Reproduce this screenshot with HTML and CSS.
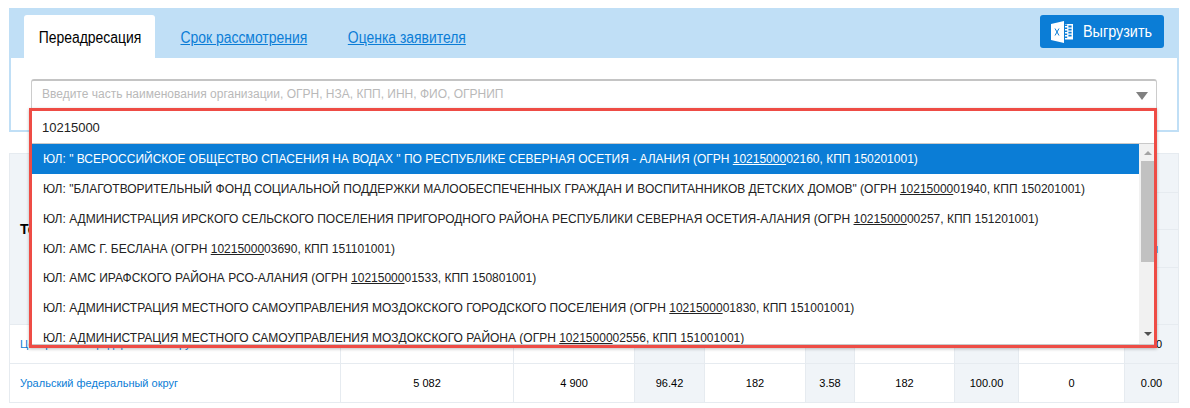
FILE: index.html
```html
<!DOCTYPE html>
<html lang="ru">
<head>
<meta charset="utf-8">
<title>Переадресация</title>
<link rel="stylesheet" href="styles.css">
</head>
<body>
<section class="panel">
  <div class="tabbar">
    <nav class="tabs">
      <span class="tab t1 active"><span class="narrow">Переадресация</span></span>
      <a class="tab t2" href="#"><span class="narrow">Срок рассмотрения</span></a>
      <a class="tab t3" href="#"><span class="narrow">Оценка заявителя</span></a>
    </nav>
    <button class="export">
      <svg class="xls" width="24" height="24" viewBox="0 0 24 24">
        <path fill="#fff" d="M1 4 L14 1 V23 L1 20 Z"/>
        <path fill="#fff" d="M15 4 H23 V19.5 H15 V18 H17.2 V16.5 H15 V15 H17.2 V13.5 H15 V12 H17.2 V10.5 H15 V9 H17.2 V7.5 H15 V6 H17.2 V4.5 H15 Z M18.4 5.6 V7.5 H21.6 V5.6 Z M18.4 8.8 V10.5 H21.6 V8.8 Z M18.4 11.8 V13.5 H21.6 V11.8 Z M18.4 14.8 V16.5 H21.6 V14.8 Z"/>
        <path fill="none" stroke="#0b7dd6" stroke-width="1" d="M5 8.5 L9 15.5 M9 8.5 L5 15.5"/>
      </svg>
      <span class="export-label">Выгрузить</span>
    </button>
  </div>
  <div class="filter">
    <div class="select">
      <span class="placeholder">Введите часть наименования организации, ОГРН, НЗА, КПП, ИНН, ФИО, ОГРНИП</span>
      <i class="caret"></i>
      <div class="dropdown">
        <div class="search">10215000</div>
        <div class="listwrap">
          <ul class="options">
            <li class="current">ЮЛ: " ВСЕРОССИЙСКОЕ ОБЩЕСТВО СПАСЕНИЯ НА ВОДАХ " ПО РЕСПУБЛИКЕ СЕВЕРНАЯ ОСЕТИЯ - АЛАНИЯ (ОГРН <u>10215000</u>02160, КПП 150201001)</li>
            <li>ЮЛ: "БЛАГОТВОРИТЕЛЬНЫЙ ФОНД СОЦИАЛЬНОЙ ПОДДЕРЖКИ МАЛООБЕСПЕЧЕННЫХ ГРАЖДАН И ВОСПИТАННИКОВ ДЕТСКИХ ДОМОВ" (ОГРН <u>10215000</u>01940, КПП 150201001)</li>
            <li>ЮЛ: АДМИНИСТРАЦИЯ ИРСКОГО СЕЛЬСКОГО ПОСЕЛЕНИЯ ПРИГОРОДНОГО РАЙОНА РЕСПУБЛИКИ СЕВЕРНАЯ ОСЕТИЯ-АЛАНИЯ (ОГРН <u>10215000</u>00257, КПП 151201001)</li>
            <li>ЮЛ: АМС Г. БЕСЛАНА (ОГРН <u>10215000</u>03690, КПП 151101001)</li>
            <li>ЮЛ: АМС ИРАФСКОГО РАЙОНА РСО-АЛАНИЯ (ОГРН <u>10215000</u>01533, КПП 150801001)</li>
            <li>ЮЛ: АДМИНИСТРАЦИЯ МЕСТНОГО САМОУПРАВЛЕНИЯ МОЗДОКСКОГО ГОРОДСКОГО ПОСЕЛЕНИЯ (ОГРН <u>10215000</u>01830, КПП 151001001)</li>
            <li>ЮЛ: АДМИНИСТРАЦИЯ МЕСТНОГО САМОУПРАВЛЕНИЯ МОЗДОКСКОГО РАЙОНА (ОГРН <u>10215000</u>02556, КПП 151001001)</li>
          </ul>
          <div class="scrollbar">
            <i class="arrow up"></i>
            <div class="track"><div class="thumb"></div></div>
            <i class="arrow down"></i>
          </div>
        </div>
      </div>
    </div>
  </div>
</section>
<table class="report">
  <colgroup>
    <col class="c1"><col class="c2"><col class="c3"><col class="c4"><col class="c5"><col class="c6"><col class="c7"><col class="c8"><col class="c9"><col class="c10">
  </colgroup>
  <thead>
    <tr class="h1"><th class="name" rowspan="4">Территория</th><th colspan="9"></th></tr>
    <tr class="h2"><th colspan="9"></th></tr>
    <tr class="h3"><th class="group" colspan="9">Показатели</th></tr>
    <tr class="h4"><th></th><th></th><th></th><th></th><th></th><th></th><th></th><th></th><th></th></tr>
  </thead>
  <tbody>
    <tr><td class="name"><a href="#">Центральный федеральный округ</a></td><td>15 401</td><td>14 820</td><td class="alt">96.23</td><td>581</td><td class="alt">3.77</td><td>581</td><td class="alt">100.00</td><td>0</td><td class="alt">0.00</td></tr>
    <tr><td class="name"><a href="#">Уральский федеральный округ</a></td><td>5 082</td><td>4 900</td><td class="alt">96.42</td><td>182</td><td class="alt">3.58</td><td>182</td><td class="alt">100.00</td><td>0</td><td class="alt">0.00</td></tr>
  </tbody>
</table>
</body>
</html>
```
FILE: styles.css
```css
* { box-sizing: border-box; }
html, body { margin: 0; padding: 0; }
body {
  width: 1190px;
  height: 408px;
  overflow: hidden;
  padding: 8px 11px 0 9px;
  background: #fff;
  font-family: "Liberation Sans", Arial, sans-serif;
  color: #000;
}
.panel { position: relative; }
.tabbar {
  height: 50px;
  background: #c0dff6;
  padding: 7px 15px 0 15px;
  display: flex;
  justify-content: space-between;
  align-items: flex-start;
}
.tabs { display: flex; height: 43px; gap: 10px; }
.tab {
  display: flex;
  justify-content: center;
  font-size: 16px;
  line-height: 45px;
  color: #0b7dd6;
  text-decoration: underline;
  white-space: nowrap;
}
.t1 { width: 131px; }
.t2 { width: 158px; }
.t3 { width: 148px; }
.narrow {
  display: inline-block;
  flex: none;
  transform: scaleX(0.87);
}
.tab.active {
  background: #fff;
  color: #000;
  text-decoration: none;
  border-radius: 3px 3px 0 0;
}
.export {
  width: 124px;
  height: 33px;
  border: 0;
  border-radius: 3px;
  background: #0b7dd6;
  color: #fff;
  font-family: "Liberation Sans", Arial, sans-serif;
  font-size: 16px;
  display: flex;
  align-items: center;
  gap: 9px;
  padding: 0 0 0 10px;
}
.export-label {
  display: inline-block;
  transform: scaleX(0.9);
  transform-origin: left center;
}
.filter {
  height: 74px;
  background: #fff;
  border: 2px solid #c0dff6;
  border-top: 0;
  padding: 21px 20px 0 20px;
}
.select {
  position: relative;
  height: 40px;
  border: 1px solid #ccc;
  border-top: 2px solid #c4c4c4;
  border-radius: 3px;
  padding: 5px 10px;
  background: #fff;
}
.placeholder {
  display: block;
  font-size: 12px;
  line-height: 17px;
  color: #b9b9b9;
}
.caret {
  position: absolute;
  right: 8px;
  top: 11px;
  width: 0;
  height: 0;
  border-left: 6px solid transparent;
  border-right: 6px solid transparent;
  border-top: 8px solid #808080;
}
.dropdown {
  position: absolute;
  left: -3px;
  right: -1px;
  top: 27px;
  height: 240px;
  background: #fff;
  border: 3px solid #ee4c45;
  box-shadow: 0 1px 3px rgba(0, 0, 0, 0.25);
  z-index: 5;
}
.search {
  height: 33px;
  line-height: 34px;
  padding-left: 10px;
  font-size: 13px;
  color: #222;
  border-bottom: 1px solid #c9c9c9;
}
.listwrap {
  display: flex;
  height: 201px;
  border-bottom: 1px solid #c9c9c9;
}
.options {
  flex: 1;
  margin: 0;
  padding: 0;
  list-style: none;
  overflow: hidden;
  font-size: 12px;
  color: #222;
}
.options li {
  height: 29.85px;
  line-height: 30.3px;
  padding-left: 11px;
  white-space: nowrap;
}
.options li.current {
  background: #0b7dd6;
  color: #fff;
}
.options u { text-underline-offset: 1px; }
.scrollbar {
  width: 15px;
  background: #f1f1f1;
  display: flex;
  flex-direction: column;
  align-items: center;
}
.track { flex: 1; width: 100%; padding-left: 2px; }
.thumb { height: 101px; background: #c1c1c1; }
.arrow {
  flex: none;
  width: 0;
  height: 0;
  border-left: 4px solid transparent;
  border-right: 4px solid transparent;
}
.arrow.up { margin: 7px 0 6px 2px; border-bottom: 4px solid #a3a3a3; }
.arrow.down { margin: 5px 0 8px 2px; border-top: 4px solid #505050; }
.report {
  margin-top: 21px;
  width: 1169px;
  table-layout: fixed;
  border-collapse: collapse;
  font-size: 11px;
}
.c1 { width: 331px; }
.c2 { width: 173px; }
.c3 { width: 121px; }
.c4 { width: 70px; }
.c5 { width: 101px; }
.c6 { width: 49px; }
.c7 { width: 100px; }
.c8 { width: 64px; }
.c9 { width: 106px; }
.c10 { width: 54px; }
.report th, .report td { border: 1px solid #e6ebf0; padding: 0; }
.report th { background: #f0f4f8; }
.report th.name { text-align: left; padding: 0 0 20px 10px; font-size: 14px; }
.report th.group { text-align: right; padding-right: 20px; color: #1a4f9c; font-size: 12px; }
.h1 { height: 39px; }
.h2 { height: 37px; }
.h3 { height: 38px; }
.h4 { height: 57px; }
.report td { height: 39px; text-align: center; }
.report td.name { text-align: left; padding-left: 10px; }
.report td.alt { background: #f0f4f8; }
.report a { color: #0b7dd6; text-decoration: none; }
```
